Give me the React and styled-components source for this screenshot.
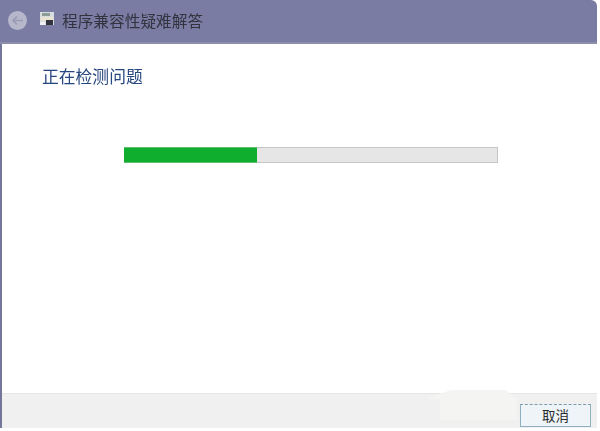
import React from 'react';
import styled, { createGlobalStyle } from 'styled-components';

const GlobalStyle = createGlobalStyle`
  html, body {
    margin: 0;
    padding: 0;
    background: #fff;
  }
`;

const Window = styled.div`
  width: 597px;
  height: 428px;
  display: flex;
  flex-direction: column;
  border-radius: 0 6px 0 0;
  overflow: hidden;
  font-family: "Noto Sans CJK SC", "Liberation Sans", sans-serif;
`;

const TitleBar = styled.div`
  height: 44px;
  flex: none;
  display: flex;
  align-items: center;
  padding-left: 8px;
  padding-bottom: 2px;
  box-sizing: border-box;
  background: #7a7ca4;
  border-bottom: 2px solid #8c8eac;
`;

const BackButton = styled.div`
  width: 19px;
  height: 19px;
  border-radius: 50%;
  background: #b6b7ca;
  filter: blur(0.5px);
  display: flex;
  align-items: center;
  justify-content: center;
`;

const AppIcon = styled.svg`
  width: 14px;
  height: 13px;
  margin-left: 13px;
  margin-bottom: 3px;
  filter: blur(0.4px);
`;

const Title = styled.div`
  margin-left: 8px;
  font-size: 15.7px;
  color: #33333f;
  filter: blur(0.3px);
`;

const Body = styled.div`
  flex: 1;
  display: flex;
  flex-direction: column;
  background: #fff;
  border-left: 2px solid #74779b;
`;

const Content = styled.div`
  flex: 1;
  padding: 20px 0 0 40px;
`;

const Heading = styled.div`
  font-size: 16.8px;
  line-height: 24px;
  color: #27477f;
  filter: blur(0.3px);
`;

const Track = styled.div`
  width: 374px;
  height: 16px;
  margin: 59px 0 0 82px;
  box-sizing: border-box;
  background: #e6e6e6;
  border: 1px solid #c6c6c6;
`;

const Fill = styled.div`
  height: 16px;
  margin: -1px 0 0 -1px;
  background: #0fae2f;
  border-top: 1px solid #5fbd70;
  border-bottom: 1px solid #5fbd70;
  box-sizing: border-box;
`;

const Footer = styled.div`
  position: relative;
  height: 35px;
  flex: none;
  display: flex;
  align-items: center;
  justify-content: flex-end;
  padding-right: 6px;
  box-sizing: border-box;
  background: #f0f0f0;
  border-top: 1px solid #e6e6e6;
`;

const ErasedPatch = styled.div`
  position: absolute;
  left: 423px;
  top: -4px;
  width: 92px;
  height: 30px;
  background: #f4f4f2;
  clip-path: polygon(28% 0, 88% 0, 100% 30%, 100% 100%, 16% 100%, 16% 30%, 0 30%);
`;

const CancelButton = styled.button`
  position: relative;
  width: 71px;
  height: 23px;
  padding: 0;
  margin-top: 9px;
  font-family: inherit;
  font-size: 13.5px;
  line-height: 19px;
  color: #2b2b2b;
  background: #eef4f7;
  border: 1px solid #8fb0bd;
  border-top: 1px dashed #7f9aa8;
`;

const progress = 35.8;

export default function App() {
  return (
    <Window>
      <GlobalStyle />
      <TitleBar>
        <BackButton>
          <svg width="13" height="11" viewBox="0 0 13 11" fill="none" stroke="#9a9ab4" strokeWidth="1.6">
            <path d="M12 5.5H2M6 1.5 2 5.5l4 4" />
          </svg>
        </BackButton>
        <AppIcon viewBox="0 0 14 13">
          <rect width="14" height="13" fill="#d8dde2" />
          <rect x="2" y="1" width="8" height="3" fill="#8c9c96" />
          <rect x="1" y="5" width="12" height="4" fill="#e9e4cf" />
          <rect x="6" y="8" width="7" height="5" fill="#33333c" />
          <rect x="0" y="10" width="5" height="3" fill="#f2f2f2" />
        </AppIcon>
        <Title>程序兼容性疑难解答</Title>
      </TitleBar>
      <Body>
        <Content>
          <Heading>正在检测问题</Heading>
          <Track>
            <Fill style={{ width: `${progress}%` }} />
          </Track>
        </Content>
        <Footer>
          <ErasedPatch />
          <CancelButton>取消</CancelButton>
        </Footer>
      </Body>
    </Window>
  );
}
